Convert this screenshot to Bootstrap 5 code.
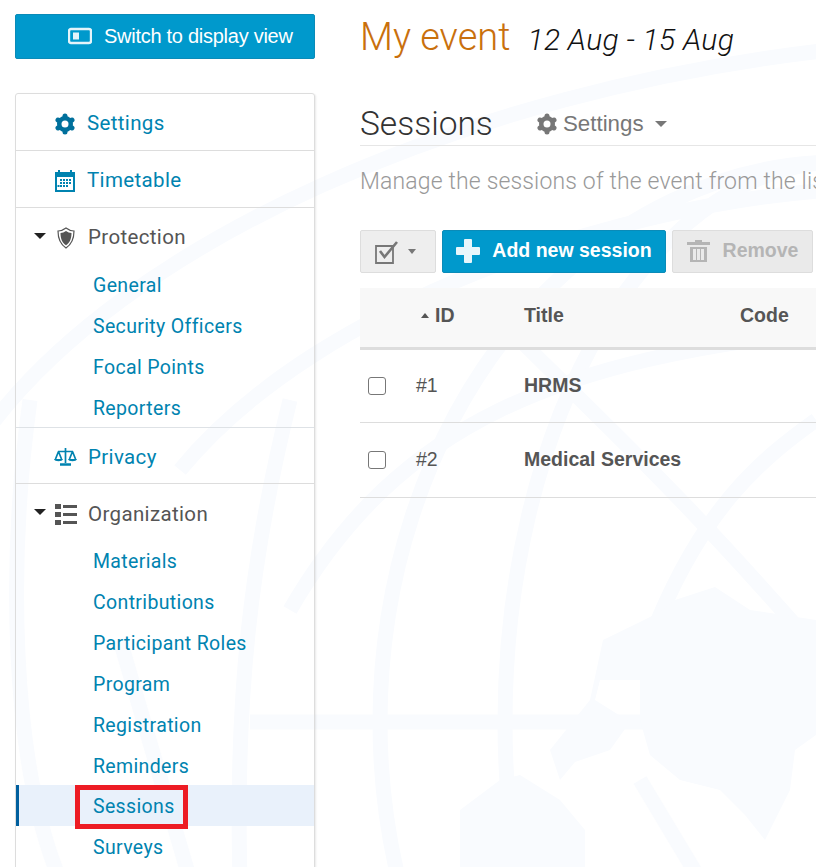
<!DOCTYPE html>
<html lang="en"><head><meta charset="utf-8"><title>Sessions</title>
<link href="https://cdn.jsdelivr.net/npm/bootstrap@5.3.0/dist/css/bootstrap.min.css" rel="stylesheet">
<style>
html,body{height:867px;overflow:hidden;background:#fff}
body{font-family:"Liberation Sans",sans-serif;color:#555;position:relative}
.wm{position:absolute;left:0;top:0;width:816px;height:867px;z-index:0}
.shell{position:relative;z-index:1;padding:14px 0 0 15px;gap:45px}
.leftcol{width:300px;flex:none}
.rightcol{flex:1 1 0;min-width:0;overflow:hidden}
.switchbtn{width:300px;height:45px;background:#0099cc;border:1px solid #0a8bb8;color:#fff;font-size:20px;letter-spacing:-.27px;border-radius:2px;padding:0 0 2px 52px;gap:12px;margin-bottom:34px}
.switchbtn:hover{background:#0099cc;color:#fff}
.menu{border:1px solid #ddd;border-radius:3px;box-shadow:1px 1px 2px rgba(0,0,0,.09);height:780px;overflow:hidden;font-family:Roboto,sans-serif}
.menuhead{height:57px;border-bottom:1px solid #ddd;font-size:20.5px;color:#0083b0;letter-spacing:.35px;padding:3px 0 0 38px;gap:11px}
.menuhead svg{flex:none}
.menuhead.plain{color:#555;border-bottom:0;padding:3px 0 0 18px;height:56px}
.hlabel{margin-left:11px}
.caret{width:0;height:0;border-left:6px solid transparent;border-right:6px solid transparent;border-top:6px solid #222;margin-right:9px;margin-top:-4px}
.subitem{height:40.85px;padding-left:77px;font-size:19.5px;letter-spacing:.35px;color:#0083b0;line-height:43px;display:block;text-decoration:none;position:relative;white-space:nowrap}
.subitem.on{background:#e9f1fb;box-shadow:inset 3px 0 0 #005f9e}
.redbox{position:absolute;left:59px;top:0;width:113px;height:44px;border:5px solid #ed1c24}
.titleline{height:52px;margin-bottom:27px;white-space:nowrap;font-family:Roboto,sans-serif;font-weight:300}
.evname{color:#c9700d;font-size:38px;line-height:46px}
.evdate{color:#111;font-size:30px;font-style:italic;margin-left:17px;letter-spacing:.3px}
.sechead{height:53px;border-bottom:1px solid #e6e6e6;white-space:nowrap}
.sectitle{font-family:Roboto,sans-serif;font-weight:300;font-size:33.5px;color:#333;width:176px;line-height:50px;padding-top:6px;height:52px}
.secset{font-size:22.3px;color:#777;gap:5px;padding-top:14px}
.caret2{width:0;height:0;border-left:6px solid transparent;border-right:6px solid transparent;border-top:6px solid #777;margin-left:6px}
.lede{font-family:Roboto,sans-serif;font-weight:300;font-size:23px;color:#999;white-space:nowrap;margin:20px 0 32px;line-height:32px;letter-spacing:.15px}
.tools{gap:6px;height:43px;margin-bottom:15px;white-space:nowrap}
.tools .btn{height:43px;border-radius:2px;font-size:19.5px;font-weight:700;padding:0 0 2px;flex:none}
.tools .btnsel{width:76px;background:#eee;border:1px solid #ddd;gap:9px;padding:0 0 0 14px}
.btnadd,.btnadd:hover{width:224px;background:#0099cc;border:1px solid #0a8bb8;color:#fff;gap:12px}
.btnrem,.btnrem:disabled{width:141px;background:#eaeaea;border:1px solid #ddd;color:#b5b5b5;gap:13px;opacity:1}
.caret3{width:0;height:0;border-left:4.5px solid transparent;border-right:4.5px solid transparent;border-top:5px solid #777}
.evtable{width:600px;min-width:600px;margin:0;--bs-table-bg:transparent;font-size:19.5px;color:#555;table-layout:fixed}
.evtable th{background:#f8f8f8;height:60px;border-bottom:3px solid #ddd;vertical-align:middle;padding:0 0 4px;font-weight:700;color:#555}
.evtable td{height:75px;vertical-align:middle;padding:0;border-bottom:1px solid #ddd;color:#555}
.evtable tr:first-child td{height:74px}
.evtable .form-check-input{width:18px;height:18px;margin:0 0 0 8px;border:1.5px solid #777;border-radius:3px;background-color:#fff;display:block}
.upc{display:inline-block;width:0;height:0;border-left:4.5px solid transparent;border-right:4.5px solid transparent;border-bottom:5px solid #555;margin:0 6px 4px 5px}
</style></head><body>
<svg class="wm" viewBox="0 0 816 867" fill="none" stroke="#f9fbfe" aria-hidden="true">
<g stroke-width="15">
<path d="M-20 440C120 240 470 90 830 50"/>
<path d="M180 470C320 300 620 205 830 190"/>
<ellipse cx="840" cy="722" rx="460" ry="560"/>
<ellipse cx="840" cy="722" rx="335" ry="560"/>
<path d="M250 722H816"/>
<path d="M510 330C600 420 690 500 860 700"/>
<path d="M816 420C760 460 700 510 650 640"/>
<path d="M290 610C400 420 560 360 830 330"/>
<path d="M640 780L700 880"/>
<path d="M30 400C8 560 10 760 60 880"/>
<path d="M290 400C250 560 235 700 240 880"/>
<path d="M120 640L190 880"/>
</g>
<g fill="#f9fbfe" stroke="none">
<path d="M603 640L640 622 660 612 675 600 715 587 750 610 816 620V735L795 750 790 790 765 840 745 815 720 790 680 780 650 755 640 720 640 680 600 680 595 700 630 722 610 750 575 762 560 780 550 750 590 700Z"/>
<path d="M460 880V810L500 780 520 775 560 800 585 830V880Z"/>
</g>
</svg>
<div class="shell d-flex">
<div class="leftcol">
<a href="#" class="btn switchbtn d-flex align-items-center text-nowrap">
<svg width="24" height="18" viewBox="0 0 24 18"><rect x="1" y="2" width="22" height="14" rx="2" fill="none" stroke="#e4f4fa" stroke-width="2.400"/><rect x="5" y="5.500" width="6" height="7" fill="#e4f4fa"/></svg>
Switch to display view</a>
<nav class="menu">
<div class="menuhead d-flex align-items-center">
<svg width="22" height="22" viewBox="0 0 22 22"><g stroke="#00709c" stroke-width="5" stroke-linecap="round"><path d="M11 3v16M4 7l14 8M4 15l14-8"/></g><circle cx="11" cy="11" r="6" fill="none" stroke="#00709c" stroke-width="4"/><circle cx="11" cy="11" r="3.500" fill="#fff"/></svg>
<span>Settings</span></div>
<div class="menuhead d-flex align-items-center">
<svg width="22" height="22" viewBox="0 0 22 22" fill="#0083b0"><path d="M1 2h3V0h2v2h10V0h2v2h3v20H1z"/><rect x="3" y="7" width="16" height="13" fill="#fff"/><g><rect x="6" y="9" width="2" height="2"/><rect x="9" y="9" width="2" height="2"/><rect x="12" y="9" width="2" height="2"/><rect x="15" y="9" width="2" height="2"/><rect x="6" y="12" width="2" height="2"/><rect x="9" y="12" width="2" height="2"/><rect x="12" y="12" width="2" height="2"/><rect x="15" y="12" width="2" height="2"/><rect x="6" y="15" width="2" height="2"/><rect x="9" y="15" width="2" height="2"/><rect x="12" y="15" width="2" height="2"/><rect x="3.500" y="15" width="2" height="2"/></g></svg>
<span>Timetable</span></div>
<div class="menuhead plain d-flex align-items-center gap-0">
<span class="caret"></span>
<svg width="22" height="22" viewBox="0 0 22 22"><path d="M11 1c2.500 2 5 2.800 8 3 0 8-2 13-8 17C5 17 3 12 3 4c3-.2 5.500-1 8-3z" fill="#fff" stroke="#555" stroke-width="1.200"/><path d="M11 4c1.800 1.300 3.500 1.800 5.500 2 0 5.500-1.500 9.500-5.500 12.300C7 15.500 5.500 11.500 5.500 6c2-.2 3.700-.7 5.500-2z" fill="#555"/></svg>
<span class="hlabel">Protection</span></div>
<div>
<a class="subitem" href="#">General</a>
<a class="subitem" href="#">Security Officers</a>
<a class="subitem" href="#">Focal Points</a>
<a class="subitem" href="#">Reporters</a></div>
<div class="menuhead d-flex align-items-center border-top">
<svg width="23" height="20" viewBox="0 0 23 20" fill="none" stroke="#0083b0" stroke-width="1.700"><path d="M11.500 1v15M4 4.500h15"/><path d="M4.500 4.500L1.500 12M4.500 4.500L7.500 12M18.500 4.500L15.500 12M18.500 4.500L21.500 12"/><path d="M0 12h9c-.5 3-8.500 3-9 0zM14 12h9c-.5 3-8.500 3-9 0z" fill="#0083b0" stroke="none"/><path d="M6 17.500h11" stroke-width="2.500"/></svg>
<span>Privacy</span></div>
<div class="menuhead plain d-flex align-items-center gap-0">
<span class="caret"></span>
<svg width="22" height="22" viewBox="0 0 22 22" fill="#555"><rect x="0" y="1" width="6" height="5"/><rect x="8" y="2" width="14" height="3"/><rect x="0" y="9" width="6" height="5"/><rect x="8" y="10" width="14" height="3"/><rect x="0" y="17" width="6" height="5"/><rect x="8" y="18" width="14" height="3"/></svg>
<span class="hlabel">Organization</span></div>
<div>
<a class="subitem" href="#">Materials</a>
<a class="subitem" href="#">Contributions</a>
<a class="subitem" href="#">Participant Roles</a>
<a class="subitem" href="#">Program</a>
<a class="subitem" href="#">Registration</a>
<a class="subitem" href="#">Reminders</a>
<a class="subitem on" href="#">Sessions<span class="redbox"></span></a>
<a class="subitem" href="#">Surveys</a></div>
</nav>
</div>
<main class="rightcol">
<div class="titleline"><span class="evname">My event</span><span class="evdate">12 Aug - 15 Aug</span></div>
<div class="sechead d-flex align-items-start">
<span class="sectitle">Sessions</span>
<span class="secset d-flex align-items-center">
<svg width="22" height="22" viewBox="0 0 22 22"><g stroke="#777" stroke-width="5" stroke-linecap="round"><path d="M11 3v16M4 7l14 8M4 15l14-8"/></g><circle cx="11" cy="11" r="6" fill="none" stroke="#777" stroke-width="4"/><circle cx="11" cy="11" r="3.500" fill="#fff"/></svg>
Settings<span class="caret2"></span></span>
</div>
<p class="lede">Manage the sessions of the event from the list below</p>
<div class="tools d-flex">
<button class="btn btnsel d-flex align-items-center" type="button">
<svg width="24" height="24" viewBox="0 0 24 24" fill="none" stroke="#777"><path d="M1 6h17v17H1z" stroke-width="1.800"/><path d="M5 11l4.500 6L22 2" stroke-width="2.600"/></svg><span class="caret3"></span></button>
<button class="btn btnadd d-flex align-items-center justify-content-center" type="button">
<svg width="24" height="24" viewBox="0 0 24 24" fill="#e8f6fb"><path d="M8 1a1 1 0 011-1h6a1 1 0 011 1v7h7a1 1 0 011 1v6a1 1 0 01-1 1h-7v7a1 1 0 01-1 1H9a1 1 0 01-1-1v-7H1a1 1 0 01-1-1V9a1 1 0 011-1h7z"/></svg>
Add new session</button>
<button class="btn btnrem d-flex align-items-center justify-content-center" type="button" disabled>
<svg width="23" height="24" viewBox="0 0 23 24" fill="#b5b5b5"><path d="M8 1h7v2h8v3H0V3h8z"/><path d="M3 8h17v15H3zM6 10v11h3V10zM10 10v11h3V10zM14 10v11h3V10z" fill-rule="evenodd"/></svg>
Remove</button>
</div>
<table class="table evtable">
<colgroup><col style="width:56px"><col style="width:108px"><col style="width:216px"><col></colgroup>
<thead><tr><th></th><th><span class="upc"></span>ID</th><th>Title</th><th>Code</th></tr></thead>
<tbody>
<tr><td><input class="form-check-input" type="checkbox" aria-label="Select"></td><td>#1</td><td class="fw-bold">HRMS</td><td></td></tr>
<tr><td><input class="form-check-input" type="checkbox" aria-label="Select"></td><td>#2</td><td class="fw-bold">Medical Services</td><td></td></tr>
</tbody></table>
</main>
</div>
</body></html>
